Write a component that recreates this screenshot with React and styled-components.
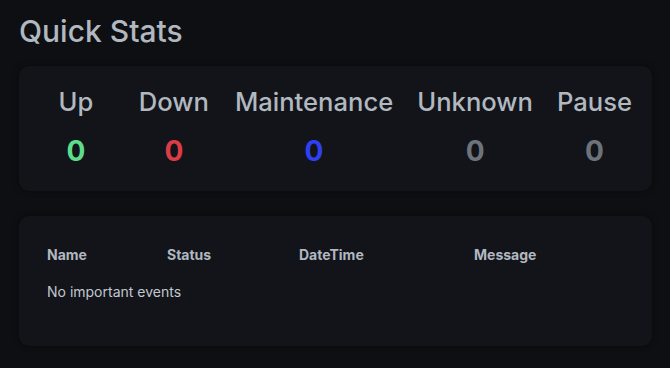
import styled, { createGlobalStyle } from 'styled-components';

const GlobalStyle = createGlobalStyle`
  html, body {
    margin: 0;
    padding: 0;
    background: #0d0f12;
  }
  body {
    font-family: Inter, "Liberation Sans", sans-serif;
    font-size: 14px;
    color: #b1b8c0;
  }
`;

const Page = styled.div`
  padding: 13px 18px 20px 19px;
`;

const Title = styled.h1`
  margin: 0 0 16px;
  font-size: 30px;
  font-weight: 500;
  line-height: 37px;
  color: #b1b8c0;
`;

const Card = styled.div`
  background: #121419;
  border-radius: 10px;
  box-shadow: 0 0 6px rgba(0, 0, 0, 0.45);
  padding: 20px;
  margin-bottom: ${(props) => props.$gap || 0}px;
`;

const StatsRow = styled.div`
  display: flex;
  margin: 0 -12px;
`;

const StatCol = styled.div`
  flex: 1 0 0%;
  padding: 0 12px;
  text-align: center;
`;

const StatLabel = styled.h3`
  margin: 0 0 14px;
  font-size: 25.6px;
  font-weight: 500;
  line-height: 31px;
  white-space: nowrap;
  color: #b1b8c0;
`;

const StatNum = styled.span`
  display: block;
  font-size: 28px;
  font-weight: 700;
  line-height: 40px;
  color: ${(props) => props.$color};
`;

const Table = styled.div`
  display: grid;
  grid-template-columns: 120px 132px 175px 1fr;
  margin-bottom: 16px;
`;

const HeadCell = styled.div`
  padding: 8px;
  font-size: 14px;
  font-weight: 700;
  line-height: 21px;
  color: #b1b8c0;
`;

const EmptyCell = styled.div`
  grid-column: 1 / -1;
  padding: 8px;
  font-size: 14px;
  line-height: 21px;
  color: #c2c8cf;
`;

const stats = [
  { label: 'Up', value: 0, color: '#5cdd8b' },
  { label: 'Down', value: 0, color: '#dc3c45' },
  { label: 'Maintenance', value: 0, color: '#2e40f0' },
  { label: 'Unknown', value: 0, color: '#6c737b' },
  { label: 'Pause', value: 0, color: '#6c737b' },
];

const columns = ['Name', 'Status', 'DateTime', 'Message'];

const App = () => {
  return (
    <Page>
      <GlobalStyle />
      <Title>Quick Stats</Title>
      <Card $gap={25}>
        <StatsRow>
          {stats.map((s) => (
            <StatCol key={s.label}>
              <StatLabel>{s.label}</StatLabel>
              <StatNum $color={s.color}>{s.value}</StatNum>
            </StatCol>
          ))}
        </StatsRow>
      </Card>
      <Card>
        <Table>
          {columns.map((c) => (
            <HeadCell key={c}>{c}</HeadCell>
          ))}
          <EmptyCell>No important events</EmptyCell>
        </Table>
      </Card>
    </Page>
  );
};

export default App;
